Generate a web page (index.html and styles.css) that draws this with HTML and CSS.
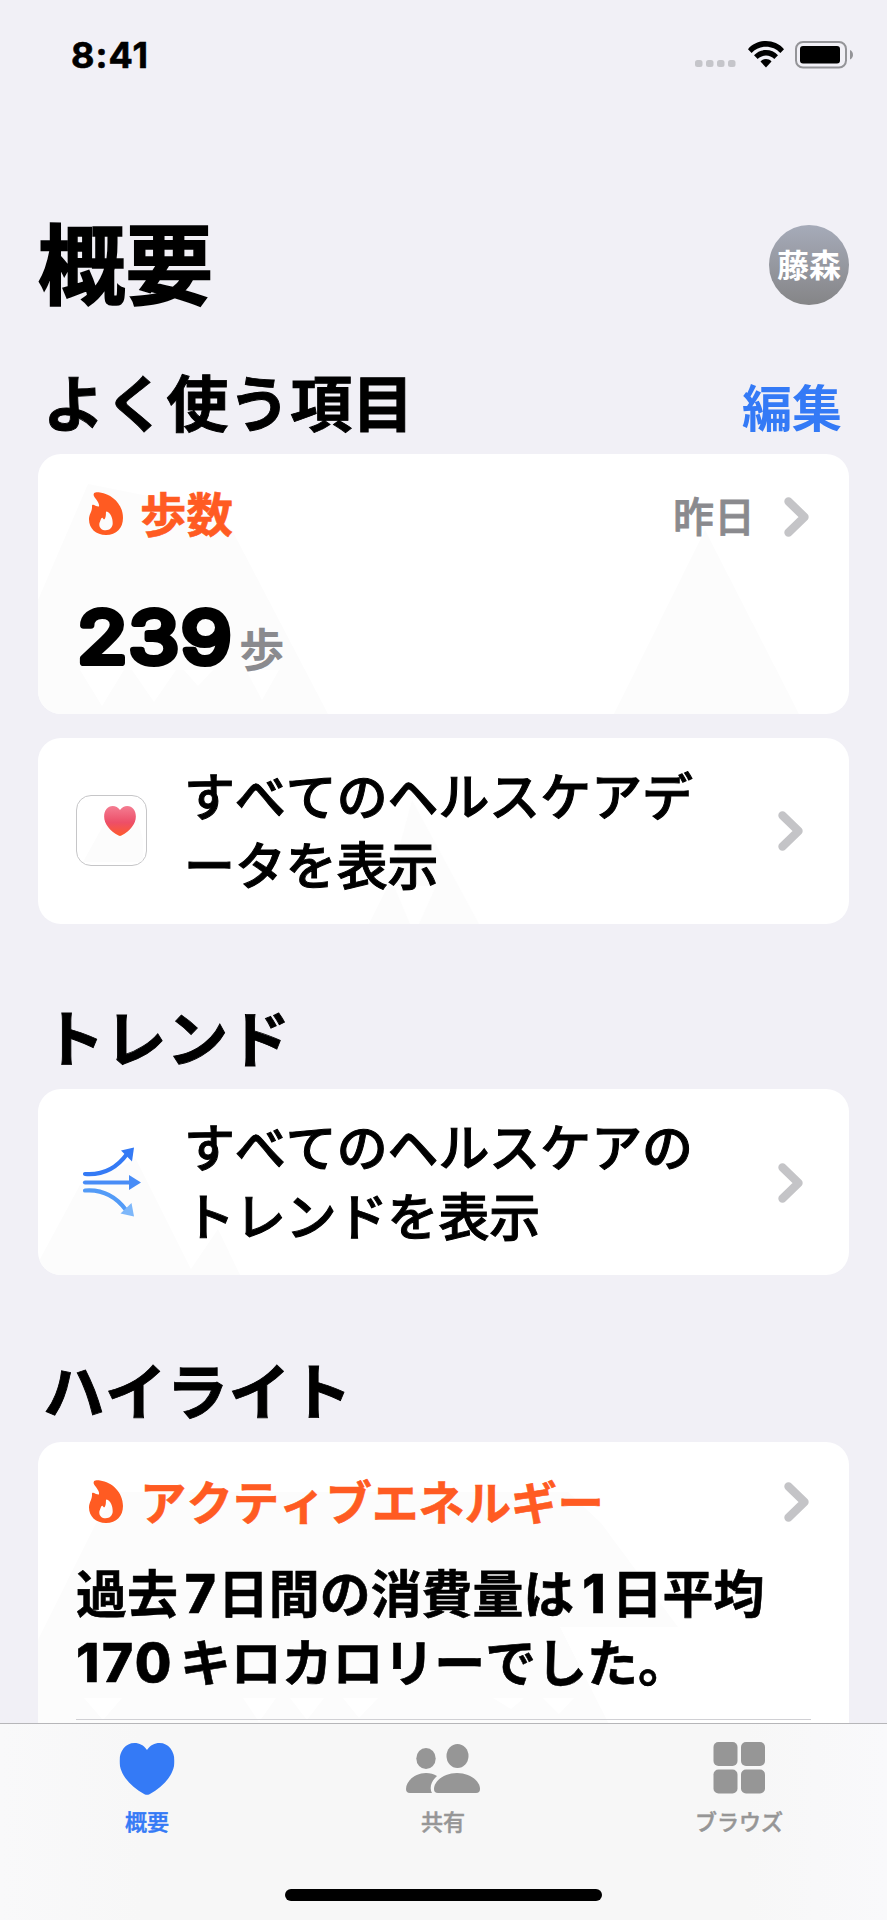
FILE: index.html
```html
<!DOCTYPE html>
<html lang="ja">
<head>
<meta charset="utf-8">
<title>概要</title>
<link rel="stylesheet" href="styles.css">
</head>
<body>
<svg class="defs" width="0" height="0" aria-hidden="true">
  <defs>
    <symbol id="flame" viewBox="0 0 34 43">
      <path fill-rule="evenodd" d="M5 1.2C6 .2 8.500 0 11 .4C23 2 34 12 34 26C34 36 27.500 43 17 43C7 43 0 36.500 0 27.500C0 22.500 2.800 20 3 15.500C3 14 2.800 13 3.600 12.700C5 12.200 7 14.500 10 14.400C11 10 4.200 5.500 4.600 2.600ZM17.500 19.600C16.300 19.600 17.700 23.500 16 26.500C15 28 14.700 27.300 13.700 26C13 25.200 12.300 26.200 11.800 27.500C11 29.500 10.300 31 10.300 32.500C10.300 36 13 38.300 16.700 38.300C20.700 38.300 23.700 35.500 23.700 31.300C23.700 26 21.500 20.500 17.500 19.600Z"/>
    </symbol>
    <symbol id="chevron" viewBox="0 0 26 40">
      <path d="M4.500 4.500L20.500 20L4.500 35.500" fill="none" stroke="currentColor" stroke-width="8.400" stroke-linecap="round" stroke-linejoin="round"/>
    </symbol>
    <symbol id="heart" viewBox="0 0 55 52">
      <path d="M27.500 7C31 2 35 0 40 0C49 0 55 8 55 18C55 31 45 43 30 51.200Q27.500 52.500 25 51.200C10 43 0 31 0 18C0 8 6 0 15 0C20 0 24 2 27.500 7Z"/>
    </symbol>
    <linearGradient id="heart-fill" x1="0" y1="0" x2="0" y2="1">
      <stop offset="0" stop-color="#f47d92"/><stop offset=".55" stop-color="#ed4f68"/><stop offset="1" stop-color="#ff5a2c"/>
    </linearGradient>
  </defs>
</svg>

<div class="screen">
  <main class="content">
    <div class="status">
      <span class="clock">8:41</span>
      <div class="indicators">
        <svg class="signal" viewBox="0 0 41 7"><rect width="7.500" height="7" rx="2.500"/><rect x="11" width="7.500" height="7" rx="2.500"/><rect x="22" width="7.500" height="7" rx="2.500"/><rect x="33" width="7.500" height="7" rx="2.500"/></svg>
        <svg class="wifi" viewBox="0 0 36 27">
          <path d="M0 8.200C9-2.700 27-2.700 36 8.200L32.400 12C25 3.500 11 3.500 3.600 12Z"/>
          <path d="M6 14.300C12 7.300 24 7.300 30 14.300L26.300 18C22 13.300 14 13.300 9.700 18Z"/>
          <path d="M12.500 20.500C15.500 17.300 20.500 17.300 23.500 20.500L18 26.500Z"/>
        </svg>
        <svg class="battery" viewBox="0 0 59 28">
          <rect x="1" y="1" width="50" height="25.500" rx="7" fill="none" stroke="#949498" stroke-width="2"/>
          <rect x="5" y="5" width="40" height="17.500" rx="3" fill="#000"/>
          <path d="M55 9V18.500Q58 17 58 13.700Q58 10.500 55 9Z" fill="#949498"/>
        </svg>
      </div>
    </div>

    <header class="header">
      <h1 class="title">概要</h1>
      <div class="avatar"><span>藤森</span></div>
    </header>

    <section class="section section-first">
      <div class="section-head"><h2>よく使う項目</h2><a class="edit">編集</a></div>
      <article class="card card-steps">
        <svg class="facets" viewBox="0 0 811 260">
          <path d="M50 30L0 146V260H290L194 76L150 50ZM667 76L576 260H761Z"/>
          <path class="notch" d="M42 216L64 252L86 216ZM94 216L116 248L138 216ZM146 216L160 232L175 216ZM208 216L224 246L241 216Z"/>
        </svg>
        <div class="card-head">
          <svg class="flame"><use href="#flame"/></svg>
          <span class="metric">歩数</span>
          <span class="when">昨日</span>
          <svg class="chevron"><use href="#chevron"/></svg>
        </div>
        <div class="reading">
          <svg class="value" viewBox="0 0 156 62"><text transform="scale(1.14 1)" x="1 46 92" y="56">239</text></svg>
          <span class="unit">歩</span>
        </div>
      </article>
      <article class="card card-link">
        <svg class="facets" viewBox="0 0 811 186"><path d="M374 62L441 186H381L398 148L356 148L372 186H331L352 144Z"/></svg>
        <span class="app-icon">
          <svg class="app-facet" viewBox="0 0 69 69"><path d="M27 28L6 66H66V44L61 24Z"/></svg>
          <svg class="app-heart"><use href="#heart" fill="url(#heart-fill)"/></svg>
        </span>
        <p class="link-text">すべてのヘルスケアデ<br>ータを表示</p>
        <svg class="chevron"><use href="#chevron"/></svg>
      </article>
    </section>

    <section class="section section-trend">
      <div class="section-head"><h2>トレンド</h2></div>
      <article class="card card-link">
        <svg class="facets" viewBox="0 0 811 186"><path d="M42 96L2 170V186H202L180 140L153 180L98 70Z"/></svg>
        <svg class="trend-icon" viewBox="0 0 71 71" fill="none" stroke-width="4.200" stroke-linecap="round">
          <g stroke="#347af5"><path d="M9 29Q35 31 51 9"/><path d="M45 5.500L58 2.500L56 16.500Z" fill="#347af5" stroke="none"/></g>
          <g stroke="#488cf6"><path d="M9 37.500H55"/><path d="M53 30L65 37.500L53 45Z" fill="#488cf6" stroke="none"/></g>
          <g stroke="#539bf7"><path d="M9 45.500Q34 43.500 50 65"/><path d="M44.500 68.500L55.500 58L58 71.500Z" fill="#7db7fa" stroke="none"/></g>
        </svg>
        <p class="link-text">すべてのヘルスケアの<br>トレンドを表示</p>
        <svg class="chevron"><use href="#chevron"/></svg>
      </article>
    </section>

    <section class="section section-highlight">
      <div class="section-head"><h2>ハイライト</h2></div>
      <article class="card card-highlight">
        <svg class="facets" viewBox="0 0 811 282">
          <path d="M57 83L0 198V282H571L522 185H640L563 81L530 50H80Z"/>
          <path class="notch" d="M46 256L65 278L84 256ZM205 256L221 280L238 256ZM252 256L269 278L286 256ZM305 256L321 276L340 256ZM455 256L473 267L486 256ZM505 256L521 272L536 256ZM522 185H640V282H571Z"/>
        </svg>
        <div class="card-head">
          <svg class="flame"><use href="#flame"/></svg>
          <span class="metric">アクティブエネルギー</span>
          <svg class="chevron"><use href="#chevron"/></svg>
        </div>
        <p class="headline">過去<span class="num num-mid">7</span>日間の消費量は<span class="num num-one">1</span>日平均<br><span class="num num-lead">170</span>キロカロリーでした。</p>
      </article>
    </section>
  </main>

  <nav class="tabs">
    <div class="tab-row">
      <a class="tab tab-active">
        <svg class="tab-icon" viewBox="0 0 76 52"><use href="#heart" x="10.500" width="55" height="52"/></svg>
        <span>概要</span>
      </a>
      <a class="tab">
        <svg class="tab-icon" viewBox="0 0 76 52">
          <ellipse cx="21" cy="15.500" rx="9.700" ry="10.500"/>
          <path d="M1 46C1 38 10 30 21 30C25 30 29 31 32 33C28 36.500 25.500 41 25.700 45.500Q25.800 48.500 27 50H5Q1 50 1 46Z"/>
          <ellipse cx="52.500" cy="13" rx="11" ry="12"/>
          <path d="M29 46C29 38 39 30 52 30C65 30 75 38 75 46Q75 50 71 50H33Q29 50 29 46Z"/>
        </svg>
        <span>共有</span>
      </a>
      <a class="tab">
        <svg class="tab-icon" viewBox="0 0 76 52"><rect x="12.500" y="-1" width="24" height="24" rx="5"/><rect x="40" y="-1" width="24" height="24" rx="5"/><rect x="12.500" y="26.500" width="24" height="24" rx="5"/><rect x="40" y="26.500" width="24" height="24" rx="5"/></svg>
        <span>ブラウズ</span>
      </a>
    </div>
    <div class="home-bar"></div>
  </nav>
</div>
</body>
</html>
```

FILE: styles.css
```css
* { box-sizing: border-box; }
body {
  margin: 0;
  background: #f1f0f6;
  color: #000;
  font-family: "Noto Sans CJK JP", "Noto Sans", sans-serif;
  font-kerning: none;
}
h1, h2, p { margin: 0; }
svg { display: block; overflow: visible; flex: none; }
.defs { position: absolute; }

.screen {
  width: 887px;
  height: 1920px;
  display: flex;
  flex-direction: column;
  overflow: hidden;
}
.content {
  height: 1723px;
  padding: 0 38px;
  overflow: hidden;
  flex: none;
}

.status {
  height: 108px;
  padding: 0 0 0 33px;
  display: flex;
  align-items: center;
  justify-content: space-between;
}
.clock { font: 700 36px/40px Inter, sans-serif; letter-spacing: 1px; -webkit-text-stroke: .6px; margin-top: 1px; }
.indicators { display: flex; align-items: center; margin: 1px -5px 0 0; }
.signal { width: 41px; height: 7px; fill: #c5c5ca; margin: 18px 12px 0 0; }
.wifi { width: 36px; height: 27px; margin-right: 11px; }
.battery { width: 59px; height: 28px; }

.header {
  height: 80px;
  margin-top: 117px;
  display: flex;
  align-items: center;
  justify-content: space-between;
}
.title { font-size: 87.500px; line-height: 90px; font-weight: 700; margin: -10px 0 0; -webkit-text-stroke: 1.6px; }
.avatar {
  width: 80px;
  height: 80px;
  border-radius: 50%;
  background: linear-gradient(#a6abb9, #858587);
  color: #fff;
  display: flex;
  align-items: center;
  justify-content: center;
  font-size: 32px;
  line-height: 36px;
  font-weight: 700;
}
.avatar span { margin-top: -4px; }

.section-first { margin-top: 62px; }
.section-trend { margin-top: 78px; }
.section-highlight { margin-top: 80px; }
.section-head {
  height: 66px;
  margin-bottom: 21px;
  padding: 0 7px 0 5px;
  display: flex;
  align-items: center;
  justify-content: space-between;
}
.section-head h2 { font-size: 61.800px; line-height: 66px; font-weight: 700; -webkit-text-stroke: .9px; }
.edit { font-size: 50px; line-height: 54px; font-weight: 700; color: #347af6; margin-top: 10px; }

.card {
  position: relative;
  background: #fff;
  border-radius: 23px;
  overflow: hidden;
}
.card > * { position: relative; }
.card > .facets { position: absolute; left: 0; top: 0; width: 811px; height: auto; fill: #fcfcfc; }
.facets .notch { fill: #fff; }

.card-head { display: flex; align-items: center; height: 44px; }
.flame { width: 34px; height: 43px; fill: #ff5b22; margin: -1px 17px 0 0; }
.metric { font-size: 46.400px; line-height: 50px; font-weight: 700; color: #ff5b22; margin-top: -5px; -webkit-text-stroke: .6px; }
.when { margin: 0 29px 0 auto; font-size: 41px; line-height: 44px; font-weight: 500; color: #8a8a8e; -webkit-text-stroke: .8px; }
.chevron { width: 26px; height: 40px; color: #c4c4c7; margin-left: auto; }
.when + .chevron { margin-left: 0; }

.card-steps { height: 260px; padding: 38px 39px 0 51px; }
.card-steps .card-head .chevron { margin-top: 5px; }
.reading { display: flex; align-items: flex-start; margin: 71px 0 0 -13px; }
.value {
  width: 156px;
  height: 62px;
  font: 400 72px Inter, sans-serif;
  stroke: #000;
  stroke-width: 6.200px;
  stroke-linejoin: round;
}
.unit { font-size: 45.500px; line-height: 50px; font-weight: 700; color: #8a8a8e; margin: 15px 0 0 7px; }

.card-link {
  height: 186px;
  padding: 0 45px 0 38px;
  display: flex;
  align-items: center;
}
.card-steps + .card-link { margin-top: 24px; }
.section-trend .chevron { margin-top: 1px; }
.link-text { font-size: 50.900px; line-height: 69px; font-weight: 500; margin: -5px 0 0 37px; white-space: nowrap; -webkit-text-stroke: 1px; }
.app-icon {
  width: 71px;
  height: 71px;
  margin-top: -1px;
  border: 1px solid #c6c6c8;
  border-radius: 15px;
  display: grid;
  flex: none;
  overflow: hidden;
}
.app-icon svg { grid-area: 1 / 1; }
.app-facet { width: 69px; height: 69px; fill: #fcfcfc; }
.app-heart { width: 34px; height: 30px; margin: 10px 0 0 26px; }
.trend-icon { width: 71px; height: 71px; margin-top: -3px; }

.card-highlight { height: 330px; padding: 38px 39px 0 51px; }
.headline {
  margin: 33px -1px 0 -13px;
  padding: 0 0 24px;
  border-bottom: 1px solid #d0d0d4;
  font-size: 50.900px;
  line-height: 69px;
  font-weight: 700;
  white-space: nowrap;
  -webkit-text-stroke: .6px;
}
.num { font: 800 53px/1 Inter, sans-serif; }
.num-mid { margin: 0 2px 0 7px; }
.num-one { margin: 0 6px 0 8px; }
.num-lead { margin-right: 6px; letter-spacing: 2.500px; }

.tabs {
  height: 197px;
  flex: none;
  background: linear-gradient(90deg, #f9f9fa, #f7f7f7 16%, #f7f7f7 84%, #f9f9fb);
  border-top: 1px solid #b6b6b9;
  display: flex;
  flex-direction: column;
  align-items: center;
  justify-content: space-between;
  padding: 19px 0;
}
.tab-row { width: 888px; margin-left: -1px; display: grid; grid-template-columns: repeat(3, 296px); }
.tab {
  display: flex;
  flex-direction: column;
  align-items: center;
  gap: 10px;
  font-size: 22px;
  line-height: 30px;
  font-weight: 500;
  color: #969696;
  fill: #969696;
  -webkit-text-stroke: .5px;
}
.tab-active { color: #347af6; fill: #347af6; }
.tab-icon { width: 76px; height: 52px; }
.home-bar { width: 317px; height: 12px; border-radius: 6px; background: #000; }
```
